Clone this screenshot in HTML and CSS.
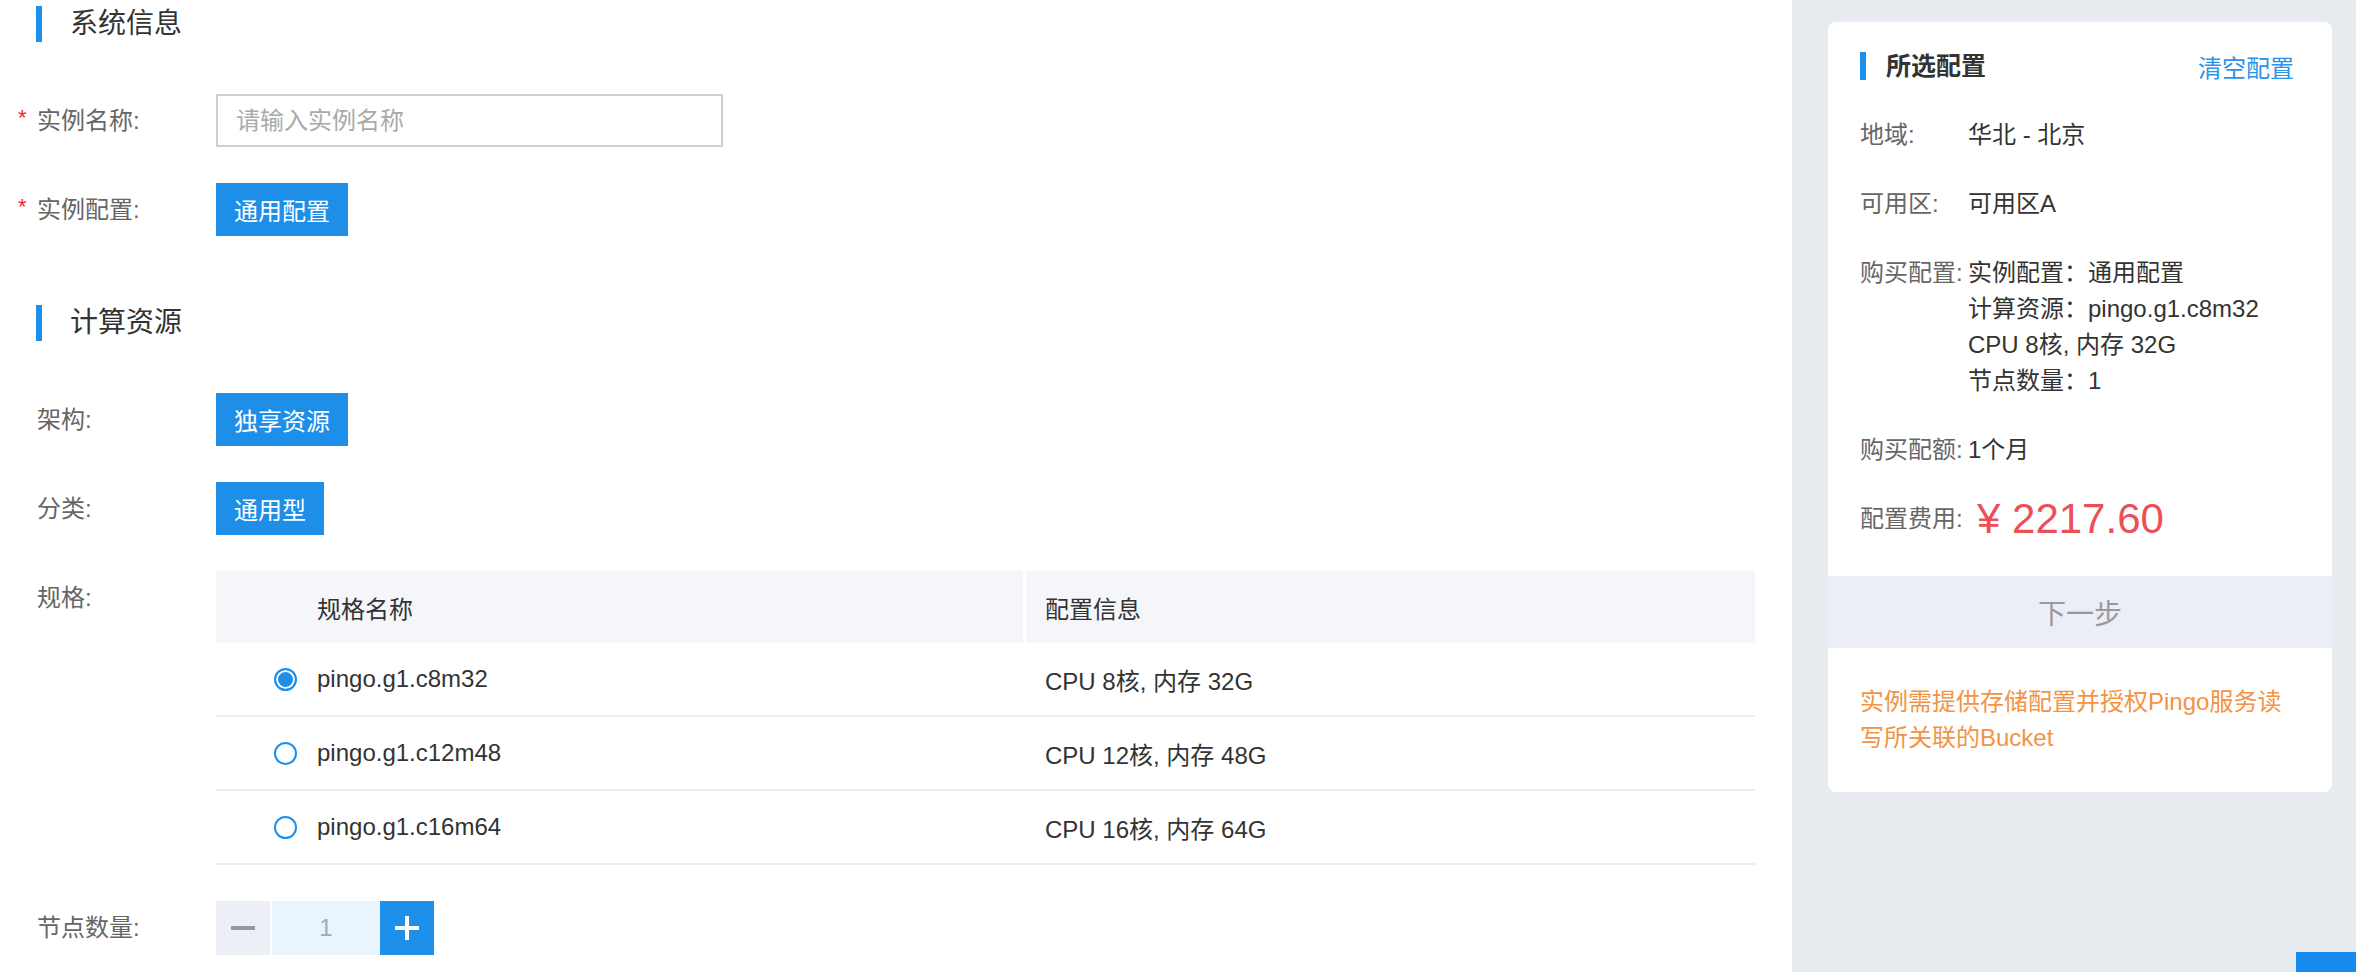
FILE: index.html
```html
<!DOCTYPE html>
<html lang="zh-CN">
<head>
  <meta charset="UTF-8" />
  <meta name="viewport" content="width=device-width, initial-scale=1.0"/>
  <title>创建实例</title>
  <link rel="stylesheet" href="styles.css">
</head>
<body>

  <div class="page">
    <main class="main">

      <div class="section">
        <h2 class="section-title">系统信息</h2>

        <div class="form-row">
          <label class="form-label" for="instanceName"><span class="req">*</span>实例名称:</label>
          <input type="text" id="instanceName" class="text-input" placeholder="请输入实例名称">
        </div>

        <div class="form-row">
          <span class="form-label"><span class="req">*</span>实例配置:</span>
          <button class="tag-btn">通用配置</button>
        </div>
      </div>

      <div class="section">
        <h2 class="section-title">计算资源</h2>

        <div class="form-row">
          <span class="form-label"><span class="req"></span>架构:</span>
          <button class="tag-btn">独享资源</button>
        </div>

        <div class="form-row">
          <span class="form-label"><span class="req"></span>分类:</span>
          <button class="tag-btn">通用型</button>
        </div>

        <div class="form-row">
          <span class="form-label"><span class="req"></span>规格:</span>
          <table class="spec-table">
            <thead>
              <tr>
                <th class="col-name"><span class="radio-slot"></span>规格名称</th>
                <th class="col-info">配置信息</th>
              </tr>
            </thead>
            <tbody>
              <tr>
                <td class="col-name"><span class="radio checked"></span>pingo.g1.c8m32</td>
                <td class="col-info">CPU 8核, 内存 32G</td>
              </tr>
              <tr>
                <td class="col-name"><span class="radio"></span>pingo.g1.c12m48</td>
                <td class="col-info">CPU 12核, 内存 48G</td>
              </tr>
              <tr>
                <td class="col-name"><span class="radio"></span>pingo.g1.c16m64</td>
                <td class="col-info">CPU 16核, 内存 64G</td>
              </tr>
            </tbody>
          </table>
        </div>

        <div class="form-row">
          <span class="form-label"><span class="req"></span>节点数量:</span>
          <div class="stepper">
            <button class="step-btn minus"><span class="bar"></span></button>
            <span class="step-value">1</span>
            <button class="step-btn plus"><span class="bar"></span><span class="bar vertical"></span></button>
          </div>
        </div>
      </div>

    </main>

    <aside class="sidebar">
      <div class="summary">
        <div class="summary-body">
          <div class="summary-head">
            <h3 class="summary-title">所选配置</h3>
            <a class="clear-link">清空配置</a>
          </div>

          <div class="summary-item">
            <span class="summary-label">地域:</span>
            <span class="summary-value">华北 - 北京</span>
          </div>

          <div class="summary-item">
            <span class="summary-label">可用区:</span>
            <span class="summary-value">可用区A</span>
          </div>

          <div class="summary-item">
            <span class="summary-label">购买配置:</span>
            <span class="summary-value">
              实例配置：通用配置<br>
              计算资源：pingo.g1.c8m32<br>
              CPU 8核, 内存 32G<br>
              节点数量：1
            </span>
          </div>

          <div class="summary-item">
            <span class="summary-label">购买配额:</span>
            <span class="summary-value">1个月</span>
          </div>

          <div class="summary-item price-row">
            <span class="summary-label">配置费用:</span>
            <span class="price">¥ 2217.60</span>
          </div>
        </div>

        <button class="next-btn">下一步</button>

        <p class="summary-note">实例需提供存储配置并授权Pingo服务读写所关联的Bucket</p>
      </div>
    </aside>
  </div>

  <div class="float-btn"></div>

</body>
</html>
```

FILE: styles.css
```css
html,
body {
  height: 100%;
}

body {
  margin: 0;
  overflow: hidden;
  font-family: "Liberation Sans", "Noto Sans CJK SC", sans-serif;
  font-size: 24px;
  color: #333;
  background-color: #fff;
}

button {
  font-family: inherit;
  cursor: pointer;
}

.page {
  display: flex;
  height: 100%;
}

/* left form */

.main {
  width: 1792px;
  flex-shrink: 0;
  box-sizing: border-box;
  padding: 6px 37px 0 18px;
}

.section {
  display: flow-root;
}

.section + .section {
  padding-top: 33px;
}

.section-title {
  margin: 0 0 52px 18px;
  height: 36px;
  line-height: 36px;
  border-left: 6px solid #1e8fe9;
  padding-left: 28px;
  font-size: 28px;
  font-weight: normal;
  color: #333;
}

.form-row {
  display: flex;
  align-items: flex-start;
  margin-bottom: 36px;
}

.form-label {
  width: 198px;
  flex-shrink: 0;
  line-height: 53px;
  color: #666;
}

.req {
  display: inline-block;
  width: 19px;
  color: #f5222d;
  font-size: 22px;
  vertical-align: top;
  line-height: 48px;
}

.text-input {
  width: 507px;
  height: 53px;
  box-sizing: border-box;
  border: 2px solid #cfcfcf;
  padding: 0 18px;
  font-family: inherit;
  font-size: 24px;
  color: #333;
  outline: none;
}

.text-input::placeholder {
  color: #aaa;
}

.tag-btn {
  height: 53px;
  padding: 0 18px;
  border: none;
  background-color: #1e8fe9;
  color: #fff;
  font-size: 24px;
}

.spec-table {
  width: 1539px;
  table-layout: fixed;
  border-collapse: separate;
  border-spacing: 0;
  text-align: left;
}

.spec-table th {
  height: 72px;
  padding: 0;
  background-color: #f5f6fa;
  font-weight: normal;
  color: #333;
}

.spec-table td {
  height: 72px;
  padding: 0;
  border-bottom: 2px solid #e9edf7;
}

.spec-table .col-name {
  width: 810px;
  box-sizing: border-box;
  padding-left: 58px;
}

.spec-table th.col-name {
  border-right: 3px solid #fff;
}

.spec-table .col-info {
  padding-left: 19px;
}

.radio,
.radio-slot {
  display: inline-block;
  width: 23px;
  height: 23px;
  margin-right: 20px;
  vertical-align: -4px;
  box-sizing: border-box;
}

.radio {
  border: 2px solid #1e8fe9;
  border-radius: 50%;
  background-color: #fff;
}

.radio.checked {
  background-color: #1e8fe9;
  box-shadow: inset 0 0 0 2px #fff;
}

.stepper {
  display: flex;
  height: 54px;
}

.step-btn {
  position: relative;
  width: 54px;
  height: 54px;
  padding: 0;
  border: none;
}

.step-btn.minus {
  background-color: #eceff6;
  margin-right: 2px;
}

.step-btn.plus {
  background-color: #1e8fe9;
}

.step-btn .bar {
  position: absolute;
  left: 15px;
  top: 25px;
  width: 24px;
  height: 4px;
  background-color: #999;
}

.step-btn.plus .bar {
  background-color: #fff;
}

.step-btn .bar.vertical {
  left: 25px;
  top: 15px;
  width: 4px;
  height: 24px;
}

.step-value {
  width: 108px;
  line-height: 54px;
  text-align: center;
  background-color: #e9f5fe;
  color: #aaa;
}

/* right summary */

.sidebar {
  flex: 1;
  background-color: #e8ebf0;
  padding: 22px 24px 0 36px;
}

.summary {
  background-color: #fff;
  border-radius: 8px;
  overflow: hidden;
}

.summary-body {
  padding: 26px 38px 39px 32px;
}

.summary-head {
  display: flex;
  justify-content: space-between;
  align-items: center;
  height: 36px;
}

.summary-title {
  margin: 0;
  border-left: 6px solid #1e8fe9;
  padding-left: 20px;
  line-height: 28px;
  font-size: 25px;
  font-weight: 600;
  color: #333;
}

.clear-link {
  color: #2b93ea;
  font-size: 24px;
  cursor: pointer;
}

.summary-item {
  display: flex;
  margin-top: 33px;
  line-height: 36px;
}

.summary-label {
  width: 108px;
  flex-shrink: 0;
  color: #666;
}

.summary-value {
  color: #333;
}

.price-row {
  align-items: center;
  height: 36px;
}

.price {
  margin-left: 9px;
  font-size: 42px;
  color: #ec4f57;
}

.next-btn {
  display: block;
  width: 100%;
  height: 72px;
  border: none;
  background-color: #ebeef7;
  color: #999;
  font-size: 28px;
}

.summary-note {
  margin: 0;
  padding: 36px 38px 36px 32px;
  line-height: 36px;
  color: #f39343;
}

.float-btn {
  position: fixed;
  right: 0;
  bottom: -40px;
  width: 60px;
  height: 60px;
  background-color: #178cf0;
}
```
